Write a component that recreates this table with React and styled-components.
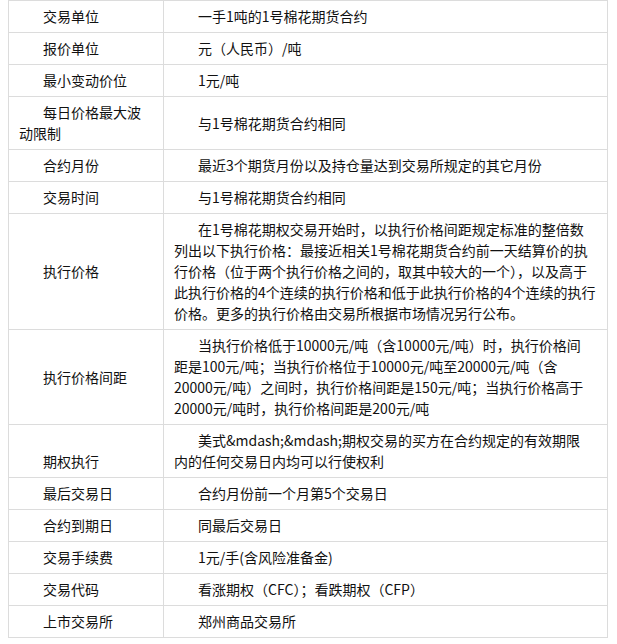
import React from "react";
import styled, { createGlobalStyle } from "styled-components";

const Global = createGlobalStyle`
  html, body { margin: 0; padding: 0; background: #fff; }
  body { margin: 0 8px; }
`;

const Table = styled.table`
  width: 600px;
  border-collapse: collapse;
  table-layout: fixed;
  font-family: "Microsoft YaHei", "Noto Sans CJK SC", sans-serif;
  font-size: 14px;
  line-height: 21px;
  color: #111;
`;

const Cell = styled.td`
  border: 1px solid #dcdcdc;
  padding: 5px 10px;
  text-indent: 24px;
  vertical-align: ${(p) => p.$valign || "middle"};
  width: ${(p) => p.$w || "auto"};
  word-break: break-all;
`;

const rows = [
  ["交易单位", ["一手1吨的1号棉花期货合约"]],
  ["报价单位", ["元（人民币）/吨"]],
  ["最小变动价位", ["1元/吨"]],
  ["每日价格最大波动限制", ["与1号棉花期货合约相同"]],
  ["合约月份", ["最近3个期货月份以及持仓量达到交易所规定的其它月份"]],
  ["交易时间", ["与1号棉花期货合约相同"]],
  [
    "执行价格",
    [
      "在1号棉花期权交易开始时，以执行价格间距规定标准的整倍数",
      "列出以下执行价格：最接近相关1号棉花期货合约前一天结算价的执",
      "行价格（位于两个执行价格之间的，取其中较大的一个），以及高于",
      "此执行价格的4个连续的执行价格和低于此执行价格的4个连续的执行",
      "价格。更多的执行价格由交易所根据市场情况另行公布。",
    ],
  ],
  [
    "执行价格间距",
    [
      "当执行价格低于10000元/吨（含10000元/吨）时，执行价格间",
      "距是100元/吨；当执行价格位于10000元/吨至20000元/吨（含",
      "20000元/吨）之间时，执行价格间距是150元/吨；当执行价格高于",
      "20000元/吨时，执行价格间距是200元/吨",
    ],
  ],
  [
    "期权执行",
    [
      "美式&mdash;&mdash;期权交易的买方在合约规定的有效期限",
      "内的任何交易日内均可以行使权利",
    ],
    "bottom",
  ],
  ["最后交易日", ["合约月份前一个月第5个交易日"]],
  ["合约到期日", ["同最后交易日"]],
  ["交易手续费", ["1元/手(含风险准备金)"]],
  ["交易代码", ["看涨期权（CFC）；看跌期权（CFP）"]],
  ["上市交易所", ["郑州商品交易所"]],
];

export default function App() {
  return (
    <>
      <Global />
      <Table>
        <tbody>
          {rows.map(([label, lines, valign]) => (
            <tr key={label}>
              <Cell $w="134px" $valign={valign}>{label}</Cell>
              <Cell>
                {lines.map((l, i) => (
                  <React.Fragment key={i}>
                    {i > 0 && <br />}
                    {l}
                  </React.Fragment>
                ))}
              </Cell>
            </tr>
          ))}
        </tbody>
      </Table>
    </>
  );
}
